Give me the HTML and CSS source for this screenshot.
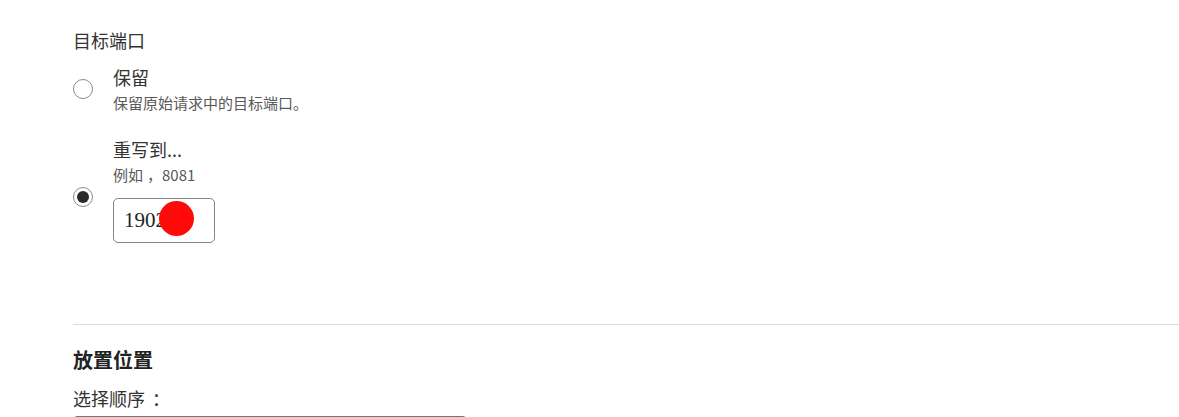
FILE: index.html
```html
<!DOCTYPE html>
<html lang="zh-CN">
<head>
<meta charset="utf-8">
<title>目标端口</title>
<link rel="stylesheet" href="styles.css">
</head>
<body>
<div class="page">
  <div class="field-label">目标端口</div>
  <div class="options">
    <div class="option">
      <span class="radio"></span>
      <div class="option-body">
        <div class="option-title">保留</div>
        <div class="option-desc">保留原始请求中的目标端口。</div>
      </div>
    </div>
    <div class="option option-rewrite">
      <span class="radio radio-checked"></span>
      <div class="option-body">
        <div class="option-title">重写到...</div>
        <div class="option-desc">例如<span class="comma">，</span>8081</div>
        <div class="input-wrap">
          <div class="text-input">1902</div>
          <span class="marker"></span>
        </div>
      </div>
    </div>
  </div>
  <hr class="divider">
  <h2 class="section-title">放置位置</h2>
  <div class="field-label order-label">选择顺序<span class="colon">：</span></div>
  <div class="select-box"></div>
</div>
</body>
</html>
```

FILE: styles.css
```css
html, body {
  margin: 0;
  padding: 0;
  background: #ffffff;
  overflow: hidden;
}

body {
  font-family: "Noto Sans CJK SC", "Noto Sans", sans-serif;
  color: #333333;
}

.page {
  padding: 28px 0 0 73px;
}

.field-label {
  font-size: 18px;
  line-height: 24px;
  color: #333333;
}

.comma {
  padding-left: 4px;
}

.colon {
  padding-left: 7px;
}

.options {
  display: flex;
  flex-direction: column;
  gap: 24px;
  margin-top: 13px;
}

.option {
  display: flex;
  align-items: center;
  gap: 20px;
}

.radio {
  box-sizing: border-box;
  width: 20px;
  height: 20px;
  border: 1.5px solid #8a8a8a;
  border-radius: 50%;
  flex: none;
  display: flex;
  align-items: center;
  justify-content: center;
}

.radio-checked::after {
  content: "";
  width: 12px;
  height: 12px;
  border-radius: 50%;
  background: #2b2b2b;
}

.option-body {
  display: flex;
  flex-direction: column;
}

.option-title {
  font-size: 18px;
  line-height: 24px;
  color: #333333;
}

.option-desc {
  font-size: 15px;
  line-height: 20px;
  color: #595959;
  margin-top: 4px;
}

.input-wrap {
  position: relative;
  margin-top: 13px;
  margin-bottom: 14px;
  width: 102px;
}

.text-input {
  box-sizing: border-box;
  width: 102px;
  height: 45px;
  border: 1px solid #858585;
  border-radius: 5px;
  padding-left: 10px;
  font-family: "Liberation Serif", serif;
  font-size: 21px;
  line-height: 43px;
  color: #222222;
}

.marker {
  position: absolute;
  left: 46px;
  top: 3px;
  width: 35px;
  height: 35px;
  border-radius: 50%;
  background: #ff0a0a;
}

.divider {
  border: none;
  border-top: 1px solid #dcdcdc;
  margin: 67px 0 0 0;
  height: 0;
}

.section-title {
  font-size: 20px;
  line-height: 28px;
  font-weight: 700;
  color: #222222;
  margin: 21px 0 0 0;
}

.order-label {
  margin-top: 12px;
}

.select-box {
  box-sizing: border-box;
  width: 394px;
  height: 40px;
  margin-top: 6px;
  border: 1px solid #767676;
  border-radius: 4px;
}
```
